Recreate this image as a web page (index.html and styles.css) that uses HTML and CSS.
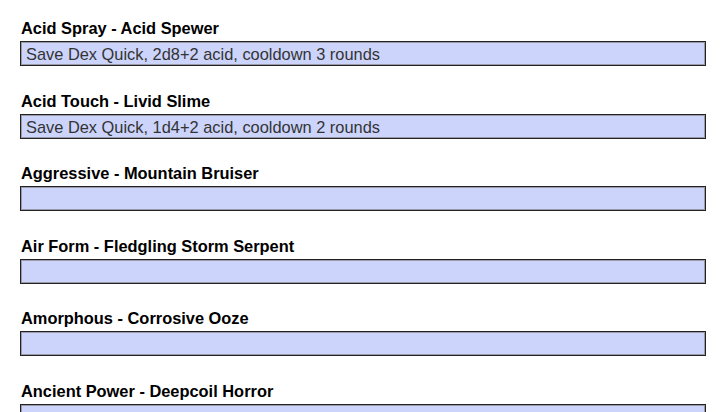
FILE: index.html
```html
<!DOCTYPE html>
<html lang="en">
<head>
    <meta charset="UTF-8">
    <meta name="viewport" content="width=device-width, initial-scale=1.0">
    <title>Monster Abilities</title>
    <link rel="stylesheet" href="styles.css">
</head>
<body>
    <div class="form">
        <div class="field">
            <label class="label">Acid Spray - Acid Spewer</label>
            <div class="box">Save Dex Quick, 2d8+2 acid, cooldown 3 rounds</div>
        </div>
        <div class="field">
            <label class="label">Acid Touch - Livid Slime</label>
            <div class="box">Save Dex Quick, 1d4+2 acid, cooldown 2 rounds</div>
        </div>
        <div class="field">
            <label class="label">Aggressive - Mountain Bruiser</label>
            <div class="box"></div>
        </div>
        <div class="field">
            <label class="label">Air Form - Fledgling Storm Serpent</label>
            <div class="box"></div>
        </div>
        <div class="field">
            <label class="label">Amorphous - Corrosive Ooze</label>
            <div class="box"></div>
        </div>
        <div class="field">
            <label class="label">Ancient Power - Deepcoil Horror</label>
            <div class="box"></div>
        </div>
    </div>
</body>
</html>
```

FILE: styles.css
```css
body {
    font-family: "Liberation Sans", Arial, sans-serif;
    background-color: #fff;
    margin: 0;
    padding: 0;
    overflow: hidden;
}
.form {
    padding: 19px 19px 0 20px;
}
.field {
    margin-bottom: 25.5px;
}
.label {
    display: block;
    font-size: 16.4px;
    font-weight: bold;
    line-height: 18px;
    color: #000;
    margin: 0 0 4px 1px;
}
.box {
    box-sizing: border-box;
    height: 25px;
    background-color: #ccd4fc;
    border: 1px solid #222;
    box-shadow: inset 0 0 0 1px #9a9aa8;
    padding: 1px 5px 0;
    font-size: 16.4px;
    line-height: 23px;
    color: #333;
}
```
